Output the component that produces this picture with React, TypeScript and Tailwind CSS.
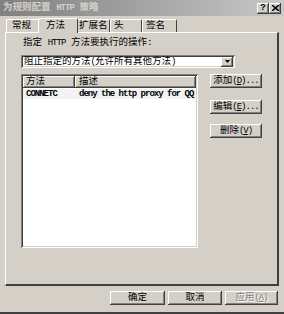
// 为规则配置 HTTP 策略 — Win2000-style property sheet, "方法" tab open.
import React from 'react';

const raised =
  'bg-[#d4d0c8] shadow-[inset_-1px_-1px_#404040,inset_1px_1px_#ffffff,inset_-2px_-2px_#808080,inset_2px_2px_#d4d0c8]';
const sunken =
  'bg-white shadow-[inset_1px_1px_#808080,inset_-1px_-1px_#ffffff,inset_2px_2px_#404040,inset_-2px_-2px_#d4d0c8]';

const font = { fontFamily: '"Liberation Mono", "Noto Sans CJK SC", monospace' };

// half-width latin text, as the bitmap dialog font draws it
function Ascii({ children }: { children: React.ReactNode }) {
  return <span className="text-[9px] tracking-[-1px]">{children}</span>;
}

function Btn({ w, children, disabled }: { w: string; children: React.ReactNode; disabled?: boolean }) {
  return (
    <div className={`${raised} ${w} h-[14px] flex items-center justify-center whitespace-nowrap leading-none ${disabled ? 'text-[#808080] [text-shadow:1px_1px_#ffffff]' : 'text-black'}`}>
      {children}
    </div>
  );
}

const tabs = [
  { label: '常规', cls: 'w-[34px] pl-[5px]' },
  { label: '方法', cls: 'w-[40px] pl-[7px]', active: true },
  { label: '扩展名', cls: 'w-[34px] pl-[2px]' },
  { label: '头', cls: 'w-[32px] pl-[3px]' },
  { label: '签名', cls: 'w-[35px] pl-[3px]' },
];

export default function App() {
  return (
    <div className="w-[284px] h-[314px] bg-[#d4d0c8] flex flex-col text-[9.5px] text-black overflow-hidden border-b-2 border-b-[#404040]" style={font}>
      {/* title bar (inactive) */}
      <div className="h-[16px] flex items-center pl-[3px] pr-[3px] bg-gradient-to-r from-[#808080] to-[#c8c8c8]">
        <span className="text-[#d4d0c8] font-bold leading-none whitespace-nowrap">为规则配置 <Ascii>HTTP</Ascii> 策略</span>
        <div className="ml-auto flex">
          <div className={`${raised} w-[12px] h-[11px] flex items-center justify-center text-[9px] font-bold leading-none`}>?</div>
          <div className={`${raised} w-[12px] h-[11px] flex items-center justify-center`}>
            <svg width="7" height="6" viewBox="0 0 7 6"><path d="M0 0l7 6M7 0L0 6" stroke="#000" strokeWidth="1.6" /></svg>
          </div>
        </div>
      </div>

      {/* tabs */}
      <div className="mt-[2px] pl-[6px] flex items-end h-[14px]">
        {tabs.map((t) => (
          <div
            key={t.label}
            className={`${t.cls} shrink-0 flex items-center whitespace-nowrap leading-none border-l border-t border-white border-r border-r-[#404040] rounded-t-[2px] ${t.active ? 'h-[15px] -mx-[2px] relative z-10 bg-[#d4d0c8] -mb-px' : 'h-[13px]'}`}
          >
            {t.label}
          </div>
        ))}
      </div>

      {/* tab page */}
      <div className="mx-[5px] w-[274px] h-[254px] flex flex-col pt-[4px] px-[15px] border-l border-t border-white border-r-2 border-b-2 border-r-[#404040] border-b-[#404040]">
        <div className="h-[12px] leading-[12px] pl-[2px] whitespace-nowrap">指定 <Ascii>HTTP</Ascii> 方法要执行的操作:</div>

        <div className={`${sunken} mt-[6px] w-[214px] h-[13px] flex items-center pl-[3px] pr-[2px]`}>
          <span className="leading-none whitespace-nowrap">阻止指定的方法<Ascii>(</Ascii>允许所有其他方法<Ascii>)</Ascii></span>
          <div className={`${raised} ml-auto w-[12px] h-[10px] flex items-center justify-center`}>
            <svg width="5" height="3" viewBox="0 0 5 3"><path d="M0 0h5L2.5 3z" fill="#000" /></svg>
          </div>
        </div>

        <div className="mt-[6px] flex">
          <div className={`${sunken} w-[181px] h-[174px] p-[2px] flex flex-col`}>
            <div className="flex h-[12px]">
              <div className={`${raised} w-[52px] flex items-center pl-[3px] leading-none`}>方法</div>
              <div className={`${raised} flex-1 flex items-center pl-[4px] leading-none`}>描述</div>
            </div>
            <div className="flex h-[10px] mt-[1px] items-center bg-[#f2f2f2] font-bold whitespace-nowrap">
              <div className="w-[52px] pl-[3px]"><Ascii>CONNETC</Ascii></div>
              <div className="pl-[4px]"><Ascii>deny the http proxy for QQ</Ascii></div>
            </div>
          </div>

          <div className="ml-[12px] flex flex-col">
            <Btn w="w-[52px]">添加<Ascii>(<u>D</u>)...</Ascii></Btn>
            <div className="mt-[12px]"><Btn w="w-[52px]">编辑<Ascii>(<u>E</u>)...</Ascii></Btn></div>
            <div className="mt-[10px]"><Btn w="w-[52px]">删除<Ascii> (<u>V</u>)</Ascii></Btn></div>
          </div>
        </div>
      </div>

      {/* dialog buttons */}
      <div className="mt-[5px] pr-[6px] flex justify-end gap-[3px]">
        <Btn w="w-[55px]">确定</Btn>
        <Btn w="w-[54px]">取消</Btn>
        <Btn w="w-[53px]" disabled>应用<Ascii>(<u>A</u>)</Ascii></Btn>
      </div>
    </div>
  );
}
